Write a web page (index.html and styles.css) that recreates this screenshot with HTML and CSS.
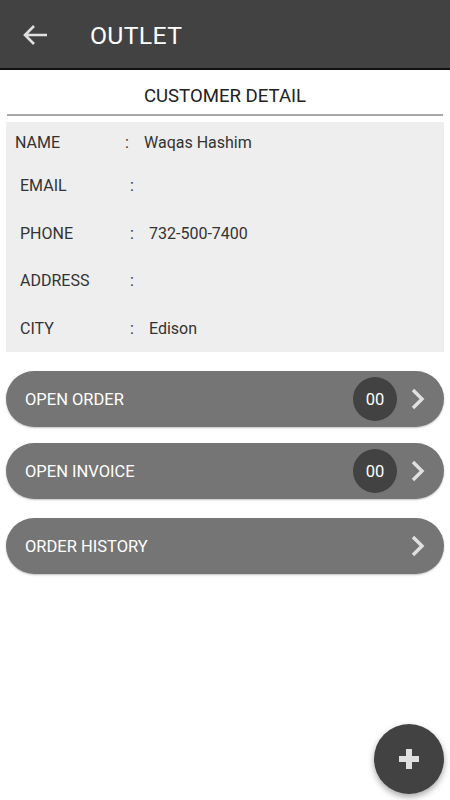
FILE: index.html
```html
<!DOCTYPE html>
<html>
<head>
<meta charset="utf-8">
<link rel="stylesheet" href="styles.css">
</head>
<body>
<div class="app">
  <header class="topbar">
    <svg class="back" width="26" height="22" viewBox="0 0 26 22"><path d="M25 11H3M12 2L3 11l9 9" fill="none" stroke="#e0e0e0" stroke-width="2.6" stroke-linecap="butt"/></svg>
    <div class="title">OUTLET</div>
  </header>
  <div class="section-title">CUSTOMER DETAIL</div>
  <div class="rule"></div>
  <div class="details">
    <div class="row first"><span class="label">NAME</span><span class="colon">:</span><span class="value">Waqas Hashim</span></div>
    <div class="row"><span class="label">EMAIL</span><span class="colon">:</span><span class="value"></span></div>
    <div class="row"><span class="label">PHONE</span><span class="colon">:</span><span class="value">732-500-7400</span></div>
    <div class="row"><span class="label">ADDRESS</span><span class="colon">:</span><span class="value"></span></div>
    <div class="row"><span class="label">CITY</span><span class="colon">:</span><span class="value">Edison</span></div>
  </div>
  <div class="actions">
    <div class="pill"><span class="pill-text">OPEN ORDER</span><span class="badge">00</span><svg class="chev" width="14" height="22" viewBox="0 0 14 22"><path d="M2 2l9 9-9 9" fill="none" stroke="#e0e0e0" stroke-width="3.4"/></svg></div>
    <div class="pill"><span class="pill-text">OPEN INVOICE</span><span class="badge">00</span><svg class="chev" width="14" height="22" viewBox="0 0 14 22"><path d="M2 2l9 9-9 9" fill="none" stroke="#e0e0e0" stroke-width="3.4"/></svg></div>
    <div class="pill"><span class="pill-text">ORDER HISTORY</span><svg class="chev" width="14" height="22" viewBox="0 0 14 22"><path d="M2 2l9 9-9 9" fill="none" stroke="#e0e0e0" stroke-width="3.4"/></svg></div>
  </div>
  <div class="fab"><svg width="24" height="24" viewBox="0 0 24 24"><path d="M12 2v20M2 12h20" stroke="#e0e0e0" stroke-width="6"/></svg></div>
</div>
</body>
</html>
```
FILE: styles.css
```css
* { box-sizing: border-box; }
html, body { margin: 0; padding: 0; background: #fff; }
body { font-family: Roboto, "Liberation Sans", sans-serif; width: 450px; height: 800px; overflow: hidden; }
.app { position: relative; width: 450px; height: 800px; }
.topbar { height: 70px; background: #424242; border-bottom: 2px solid #111; display: flex; align-items: center; padding-left: 22px; }
.back { display: block; margin-top: 1px; }
.title { color: #fff; font-size: 24.8px; margin-left: 42px; letter-spacing: 0.3px; margin-top: 3px; }
.section-title { text-align: center; font-size: 18.6px; color: #222; margin-top: 15px; height: 22px; line-height: 22px; }
.rule { height: 2px; background: #a8a8a8; margin: 7px 7px 0 7px; }
.details { background: #eeeeee; margin: 6px 6px 0 6px; height: 230px; padding-top: 11px; }
.row { display: flex; height: 47.5px; align-items: flex-start; font-size: 16px; color: #333; line-height: 20px; padding-left: 14px; }
.row .label { width: 110px; }
.row .colon { width: 19px; }
.row.first { padding-left: 9px; height: 43px; }
.actions { margin: 19px 6px 0 6px; display: flex; flex-direction: column; gap: 16px; }
.actions .pill:nth-child(3) { margin-top: 3px; }
.pill { height: 56px; border-radius: 28px; background: #757575; display: flex; align-items: center; padding-left: 19px; padding-right: 19px; color: #fff; box-shadow: 0 1px 2px rgba(0,0,0,0.25); }
.pill-text { flex: 1; font-size: 16.5px; }
.badge { width: 44px; height: 44px; border-radius: 50%; background: #424242; color: #fff; display: flex; align-items: center; justify-content: center; font-size: 16.5px; margin-right: 14px; }
.chev { display: block; }
.fab { position: absolute; left: 374px; top: 724px; width: 70px; height: 70px; border-radius: 50%; background: #424242; display: flex; align-items: center; justify-content: center; box-shadow: 0 3px 6px rgba(0,0,0,0.35); }
```
